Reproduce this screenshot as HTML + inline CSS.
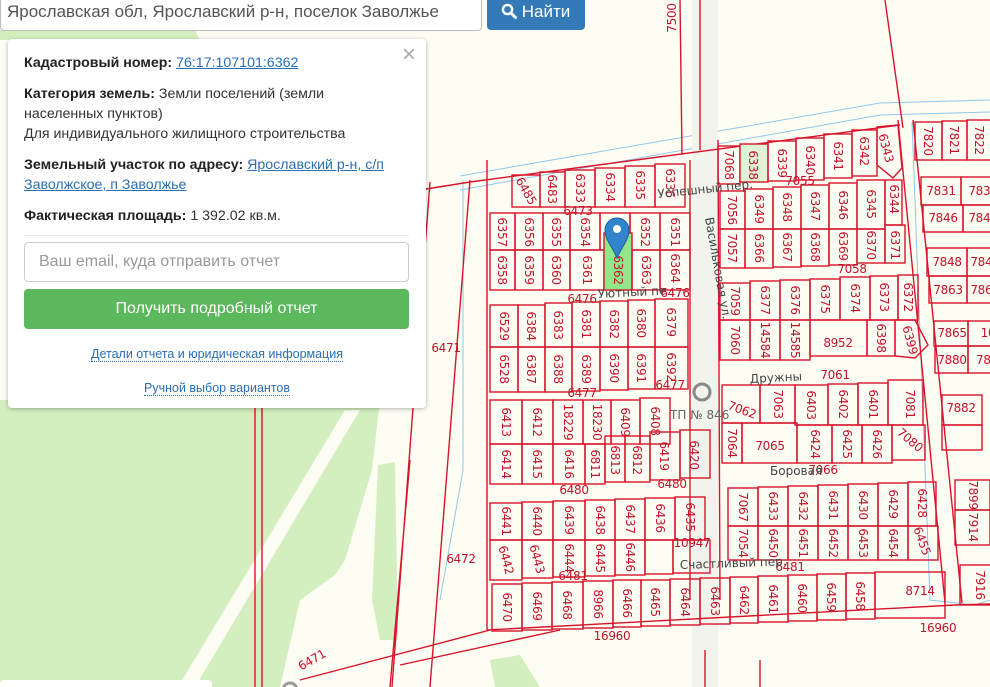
<!DOCTYPE html>
<html><head><meta charset="utf-8">
<style>
html,body{margin:0;padding:0;width:990px;height:687px;overflow:hidden;background:#fdfdf4;font-family:"Liberation Sans",Arial,sans-serif}
#map{position:absolute;left:0;top:0}
.p rect,.p polygon{fill:none;stroke:#d8142b;stroke-width:1.4}
.p text{fill:#c3132b;font-size:12px;text-anchor:middle;dominant-baseline:central;font-family:"DejaVu Sans","Liberation Sans",sans-serif;letter-spacing:-0.3px}
.st{fill:#444;font-size:12px;font-family:"DejaVu Sans","Liberation Sans",sans-serif}
.ln{stroke:#d8142b;stroke-width:1.4;fill:none}
.srch{position:absolute;left:0;top:-3px;width:482px;height:34px;border:1px solid #bbb;border-radius:0 0 4px 4px;background:#fff;box-sizing:border-box;font-size:17px;color:#555;padding:4px 0 0 6px}
.btn{position:absolute;left:487px;top:-3px;width:98px;height:33px;background:#337ab7;border-radius:0 0 4px 4px;color:#fff;font-size:17px;box-sizing:border-box;padding:5px 0 0 14px}
.panel{position:absolute;left:8px;top:39px;width:418px;height:369px;background:#fff;border-radius:4px;box-shadow:0 1px 4px rgba(0,0,0,.3);font-size:14.2px;color:#333;line-height:20px}
.panel b{color:#222}
.panel a{color:#2a6fb5;text-decoration:underline}
.panel .d{color:#2a6fb5;text-decoration:none;border-bottom:1px dotted #2a6fb5;font-size:12.5px}
</style></head><body>
<svg id="map" width="990" height="687" viewBox="0 0 990 687">
<polygon points="0,30 195,30 200,40 0,40" fill="#d4efbf"/>
<polygon points="0,400 380,400 372,470 345,560 335,575 300,600 280,687 0,687" fill="#d4efbf"/>
<polygon points="345,410 360,410 195,687 178,687" fill="#fdfdf4"/>
<polygon points="378,465 395,462 398,640 380,640 372,600" fill="#d4efbf"/>
<polygon points="490,660 520,655 540,687 495,687" fill="#d4efbf"/>
<path d="M460,176 L880,103 L990,100" stroke="#8fc7ea" fill="none"/>
<path d="M460,190 L880,115 L990,112" stroke="#8fc7ea" fill="none"/>
<path d="M463,180 L463,470 L440,600" stroke="#8fc7ea" fill="none"/>
<path d="M912,122 L930,600 L975,605 L990,600" stroke="#8fc7ea" fill="none"/>
<rect x="692" y="0" width="26" height="687" fill="#f3f3ee"/>
<path class="ln" d="M680,0 L682,155 M700,0 L700,150 M690,160 L690,600 M718,140 L720,600 M885,0 L903,128 M898,120 L945,603 M913,120 L962,603"/>
<path class="ln" d="M430,182 L392,687 M470,180 L430,687 M487,160 L487,630 L955,605 L990,604 M400,665 L560,630 M300,680 L490,630 M255,400 L255,687 M262,400 L262,687 M420,190 L470,182 L900,125 M410,460 L390,687"/>
<path class="ln" d="M705,650 L705,687 M760,660 L760,687" stroke-width="1"/>
<g class="p">
<rect x="512" y="175" width="28" height="32"/><text x="526" y="191" transform="rotate(60 526 191)">6485</text>
<rect x="540" y="172" width="25" height="35"/><text x="552" y="189" transform="rotate(90 552 189)">6483</text>
<rect x="565" y="170" width="30" height="37"/><text x="580" y="188" transform="rotate(90 580 188)">6333</text>
<rect x="595" y="168" width="30" height="39"/><text x="610" y="187" transform="rotate(90 610 187)">6334</text>
<rect x="625" y="166" width="30" height="41"/><text x="640" y="185" transform="rotate(90 640 185)">6335</text>
<rect x="655" y="164" width="30" height="43"/><text x="670" y="183" transform="rotate(90 670 183)">6336</text>
<text x="578" y="211">6473</text>
<rect x="490" y="213" width="25" height="37"/><text x="502" y="232" transform="rotate(90 502 232)">6357</text>
<rect x="515" y="213" width="28" height="37"/><text x="529" y="232" transform="rotate(90 529 232)">6356</text>
<rect x="543" y="213" width="27" height="37"/><text x="556" y="232" transform="rotate(90 556 232)">6355</text>
<rect x="570" y="213" width="30" height="37"/><text x="585" y="232" transform="rotate(90 585 232)">6354</text>
<rect x="600" y="213" width="30" height="37"/>
<rect x="630" y="213" width="30" height="37"/><text x="645" y="232" transform="rotate(90 645 232)">6352</text>
<rect x="660" y="213" width="30" height="37"/><text x="675" y="232" transform="rotate(90 675 232)">6351</text>
<rect x="490" y="250" width="25" height="40"/><text x="502" y="270" transform="rotate(90 502 270)">6358</text>
<rect x="515" y="250" width="28" height="40"/><text x="529" y="270" transform="rotate(90 529 270)">6359</text>
<rect x="543" y="250" width="27" height="40"/><text x="556" y="270" transform="rotate(90 556 270)">6360</text>
<rect x="570" y="250" width="34" height="40"/><text x="587" y="270" transform="rotate(90 587 270)">6361</text>
<rect x="604" y="233" width="28" height="57" style="fill:#8ee88a"/><text x="618" y="270" transform="rotate(90 618 270)">6362</text>
<rect x="632" y="250" width="28" height="40"/><text x="646" y="270" transform="rotate(90 646 270)">6363</text>
<rect x="660" y="250" width="30" height="40"/><text x="675" y="268" transform="rotate(90 675 268)">6364</text>
<text x="582" y="299" text-anchor="middle">6476</text><text x="675" y="293" text-anchor="middle">6476</text>
<rect x="490" y="305" width="28" height="42"/><text x="504" y="326" transform="rotate(90 504 326)">6529</text>
<rect x="518" y="305" width="27" height="42"/><text x="531" y="326" transform="rotate(90 531 326)">6384</text>
<rect x="545" y="303" width="27" height="44"/><text x="558" y="325" transform="rotate(90 558 325)">6383</text>
<rect x="572" y="302" width="28" height="45"/><text x="586" y="324" transform="rotate(90 586 324)">6381</text>
<rect x="600" y="301" width="28" height="46"/><text x="614" y="324" transform="rotate(90 614 324)">6382</text>
<rect x="628" y="300" width="27" height="47"/><text x="641" y="323" transform="rotate(90 641 323)">6380</text>
<rect x="655" y="299" width="33" height="48"/><text x="671" y="322" transform="rotate(90 671 322)">6379</text>
<rect x="490" y="347" width="28" height="45"/><text x="504" y="369" transform="rotate(90 504 369)">6528</text>
<rect x="518" y="347" width="27" height="45"/><text x="531" y="369" transform="rotate(90 531 369)">6387</text>
<rect x="545" y="347" width="27" height="45"/><text x="558" y="369" transform="rotate(90 558 369)">6388</text>
<rect x="572" y="347" width="28" height="44"/><text x="586" y="369" transform="rotate(90 586 369)">6389</text>
<rect x="600" y="347" width="28" height="43"/><text x="614" y="368" transform="rotate(90 614 368)">6390</text>
<rect x="628" y="347" width="27" height="42"/><text x="641" y="368" transform="rotate(90 641 368)">6391</text>
<rect x="655" y="347" width="33" height="42"/><text x="671" y="367" transform="rotate(90 671 367)">6392</text>
<text x="582" y="393" text-anchor="middle">6477</text><text x="670" y="385" text-anchor="middle">6477</text>
<rect x="490" y="400" width="32" height="44"/><text x="506" y="422" transform="rotate(90 506 422)">6413</text>
<rect x="522" y="400" width="31" height="44"/><text x="537" y="422" transform="rotate(90 537 422)">6412</text>
<rect x="553" y="400" width="30" height="44"/><text x="568" y="422" transform="rotate(90 568 422)">18229</text>
<rect x="583" y="400" width="28" height="44"/><text x="597" y="422" transform="rotate(90 597 422)">18230</text>
<rect x="611" y="400" width="29" height="44"/><text x="625" y="422" transform="rotate(90 625 422)">6409</text>
<rect x="640" y="398" width="30" height="46"/><text x="655" y="421" transform="rotate(90 655 421)">6408</text>
<rect x="490" y="444" width="32" height="40"/><text x="506" y="464" transform="rotate(90 506 464)">6414</text>
<rect x="522" y="444" width="31" height="40"/><text x="537" y="464" transform="rotate(90 537 464)">6415</text>
<rect x="553" y="444" width="32" height="40"/><text x="569" y="464" transform="rotate(90 569 464)">6416</text>
<rect x="585" y="444" width="20" height="40"/><text x="595" y="464" transform="rotate(90 595 464)">6811</text>
<rect x="605" y="436" width="20" height="46"/><text x="615" y="460" transform="rotate(90 615 460)">6813</text>
<rect x="625" y="436" width="25" height="46"/><text x="637" y="460" transform="rotate(90 637 460)">6812</text>
<rect x="650" y="432" width="30" height="48"/><text x="664" y="456" transform="rotate(90 664 456)">6419</text>
<rect x="680" y="430" width="30" height="48"/><text x="694" y="455" transform="rotate(90 694 455)">6420</text>
<text x="574" y="490" text-anchor="middle">6480</text><text x="672" y="484" text-anchor="middle">6480</text>
<rect x="490" y="503" width="32" height="37"/><text x="506" y="521" transform="rotate(90 506 521)">6441</text>
<rect x="522" y="502" width="31" height="38"/><text x="537" y="521" transform="rotate(90 537 521)">6440</text>
<rect x="553" y="501" width="32" height="39"/><text x="569" y="520" transform="rotate(90 569 520)">6439</text>
<rect x="585" y="500" width="30" height="40"/><text x="600" y="520" transform="rotate(90 600 520)">6438</text>
<rect x="615" y="499" width="30" height="41"/><text x="630" y="519" transform="rotate(90 630 519)">6437</text>
<rect x="645" y="498" width="30" height="42"/><text x="660" y="518" transform="rotate(90 660 518)">6436</text>
<rect x="675" y="497" width="30" height="43"/><text x="690" y="517" transform="rotate(90 690 517)">6435</text>
<rect x="490" y="540" width="32" height="40"/><text x="506" y="560" transform="rotate(75 506 560)">6442</text>
<rect x="522" y="540" width="31" height="38"/><text x="537" y="559" transform="rotate(75 537 559)">6443</text>
<rect x="553" y="540" width="32" height="37"/><text x="569" y="558" transform="rotate(90 569 558)">6444</text>
<rect x="585" y="540" width="30" height="36"/><text x="600" y="558" transform="rotate(90 600 558)">6445</text>
<rect x="615" y="540" width="30" height="35"/><text x="630" y="557" transform="rotate(90 630 557)">6446</text>
<rect x="645" y="540" width="28" height="34"/>
<rect x="673" y="540" width="37" height="33"/><text x="692" y="543">10947</text>
<text x="573" y="576" text-anchor="middle">6481</text>
<rect x="492" y="584" width="30" height="47"/><text x="507" y="607" transform="rotate(90 507 607)">6470</text>
<rect x="522" y="583" width="30" height="47"/><text x="537" y="606" transform="rotate(90 537 606)">6469</text>
<rect x="552" y="582" width="31" height="47"/><text x="567" y="605" transform="rotate(90 567 605)">6468</text>
<rect x="583" y="581" width="30" height="47"/><text x="598" y="604" transform="rotate(90 598 604)">8966</text>
<rect x="613" y="580" width="28" height="47"/><text x="627" y="603" transform="rotate(90 627 603)">6466</text>
<rect x="641" y="580" width="29" height="46"/><text x="655" y="602" transform="rotate(90 655 602)">6465</text>
<rect x="670" y="579" width="30" height="46"/><text x="685" y="602" transform="rotate(90 685 602)">6464</text>
<rect x="700" y="578" width="30" height="46"/><text x="715" y="601" transform="rotate(90 715 601)">6463</text>
<rect x="730" y="577" width="28" height="46"/><text x="744" y="600" transform="rotate(90 744 600)">6462</text>
<rect x="758" y="576" width="30" height="46"/><text x="773" y="599" transform="rotate(90 773 599)">6461</text>
<rect x="788" y="575" width="29" height="46"/><text x="802" y="598" transform="rotate(90 802 598)">6460</text>
<rect x="817" y="574" width="29" height="46"/><text x="831" y="597" transform="rotate(90 831 597)">6459</text>
<rect x="846" y="573" width="29" height="46"/><text x="860" y="596" transform="rotate(90 860 596)">6458</text>
<rect x="875" y="572" width="70" height="46"/><text x="920" y="591">8714</text>
<text x="612" y="636">16960</text><text x="938" y="628">16960</text>
<rect x="718" y="146" width="22" height="38"/><text x="729" y="165" transform="rotate(90 729 165)">7068</text>
<rect x="740" y="144" width="28" height="38" style="fill:#dff3d6"/><text x="753" y="165" transform="rotate(90 753 165)">6338</text>
<rect x="768" y="141" width="28" height="40"/><text x="782" y="163" transform="rotate(90 782 163)">6339</text>
<rect x="796" y="138" width="28" height="42"/><text x="810" y="160" transform="rotate(90 810 160)">6340</text>
<rect x="824" y="134" width="28" height="44"/><text x="838" y="156" transform="rotate(90 838 156)">6341</text>
<rect x="852" y="130" width="25" height="46"/><text x="864" y="151" transform="rotate(90 864 151)">6342</text>
<polygon points="877,127 898,125 902,168 893,178 877,165"/><text x="886" y="148" transform="rotate(75 886 148)">6343</text>
<text x="800" y="181">7055</text>
<rect x="720" y="191" width="25" height="38"/><text x="732" y="210" transform="rotate(90 732 210)">7056</text>
<rect x="745" y="189" width="28" height="40"/><text x="759" y="209" transform="rotate(90 759 209)">6349</text>
<rect x="773" y="187" width="28" height="42"/><text x="787" y="207" transform="rotate(90 787 207)">6348</text>
<rect x="801" y="185" width="28" height="44"/><text x="815" y="206" transform="rotate(90 815 206)">6347</text>
<rect x="829" y="183" width="28" height="46"/><text x="843" y="205" transform="rotate(90 843 205)">6346</text>
<rect x="857" y="180" width="28" height="49"/><text x="871" y="204" transform="rotate(90 871 204)">6345</text>
<rect x="885" y="180" width="17" height="45"/><text x="894" y="199" transform="rotate(90 894 199)">6344</text>
<rect x="720" y="229" width="25" height="39"/><text x="732" y="248" transform="rotate(90 732 248)">7057</text>
<rect x="745" y="229" width="28" height="39"/><text x="759" y="248" transform="rotate(90 759 248)">6366</text>
<rect x="773" y="229" width="28" height="38"/><text x="787" y="247" transform="rotate(90 787 247)">6367</text>
<rect x="801" y="229" width="28" height="37"/><text x="815" y="247" transform="rotate(90 815 247)">6368</text>
<rect x="829" y="229" width="28" height="36"/><text x="843" y="246" transform="rotate(90 843 246)">6369</text>
<rect x="857" y="229" width="28" height="34"/><text x="871" y="245" transform="rotate(90 871 245)">6370</text>
<rect x="885" y="225" width="20" height="38"/><text x="895" y="245" transform="rotate(90 895 245)">6371</text>
<text x="852" y="269" text-anchor="middle">7058</text>
<rect x="720" y="283" width="30" height="37"/><text x="735" y="301" transform="rotate(90 735 301)">7059</text>
<rect x="750" y="281" width="30" height="39"/><text x="765" y="300" transform="rotate(90 765 300)">6377</text>
<rect x="780" y="280" width="30" height="40"/><text x="795" y="300" transform="rotate(90 795 300)">6376</text>
<rect x="810" y="279" width="30" height="41"/><text x="825" y="299" transform="rotate(90 825 299)">6375</text>
<rect x="840" y="277" width="30" height="43"/><text x="855" y="298" transform="rotate(90 855 298)">6374</text>
<rect x="870" y="276" width="28" height="44"/><text x="884" y="297" transform="rotate(90 884 297)">6373</text>
<rect x="898" y="275" width="20" height="45"/><text x="908" y="297" transform="rotate(90 908 297)">6372</text>
<rect x="720" y="320" width="30" height="40"/><text x="735" y="340" transform="rotate(90 735 340)">7060</text>
<rect x="750" y="320" width="30" height="40"/><text x="765" y="340" transform="rotate(90 765 340)">14584</text>
<rect x="780" y="320" width="30" height="40"/><text x="795" y="340" transform="rotate(90 795 340)">14585</text>
<rect x="810" y="320" width="57" height="36"/><text x="838" y="343">8952</text>
<rect x="867" y="320" width="28" height="36"/><text x="881" y="338" transform="rotate(90 881 338)">6398</text>
<polygon points="895,320 915,320 928,345 915,358 895,356"/><text x="910" y="340" transform="rotate(75 910 340)">6399</text>
<text x="835" y="375" text-anchor="middle">7061</text>
<rect x="722" y="385" width="38" height="38"/><text x="742" y="410" transform="rotate(20 742 410)">7062</text>
<rect x="760" y="385" width="35" height="38"/><text x="778" y="404" transform="rotate(90 778 404)">7063</text>
<rect x="795" y="385" width="33" height="40"/><text x="811" y="405" transform="rotate(90 811 405)">6403</text>
<rect x="828" y="384" width="30" height="41"/><text x="843" y="404" transform="rotate(90 843 404)">6402</text>
<rect x="858" y="383" width="30" height="42"/><text x="873" y="404" transform="rotate(90 873 404)">6401</text>
<rect x="888" y="380" width="35" height="45"/><text x="910" y="404" transform="rotate(90 910 404)">7081</text>
<rect x="722" y="423" width="20" height="40"/><text x="732" y="443" transform="rotate(90 732 443)">7064</text>
<rect x="742" y="423" width="55" height="40"/><text x="770" y="446">7065</text>
<rect x="797" y="425" width="35" height="38"/><text x="815" y="444" transform="rotate(90 815 444)">6424</text>
<rect x="832" y="425" width="30" height="38"/><text x="847" y="444" transform="rotate(90 847 444)">6425</text>
<rect x="862" y="425" width="30" height="38"/><text x="877" y="444" transform="rotate(90 877 444)">6426</text>
<rect x="892" y="425" width="33" height="35"/><text x="910" y="440" transform="rotate(40 910 440)">7080</text>
<text x="823" y="470">7066</text>
<rect x="728" y="488" width="30" height="38"/><text x="743" y="507" transform="rotate(90 743 507)">7067</text>
<rect x="758" y="487" width="30" height="39"/><text x="773" y="506" transform="rotate(90 773 506)">6433</text>
<rect x="788" y="486" width="30" height="40"/><text x="803" y="506" transform="rotate(90 803 506)">6432</text>
<rect x="818" y="485" width="30" height="41"/><text x="833" y="505" transform="rotate(90 833 505)">6431</text>
<rect x="848" y="484" width="30" height="42"/><text x="863" y="505" transform="rotate(90 863 505)">6430</text>
<rect x="878" y="483" width="30" height="43"/><text x="893" y="504" transform="rotate(90 893 504)">6429</text>
<rect x="908" y="482" width="28" height="44"/><text x="922" y="503" transform="rotate(90 922 503)">6428</text>
<rect x="728" y="526" width="30" height="34"/><text x="743" y="543" transform="rotate(90 743 543)">7054</text>
<rect x="758" y="526" width="30" height="34"/><text x="773" y="543" transform="rotate(90 773 543)">6450</text>
<rect x="788" y="526" width="30" height="34"/><text x="803" y="543" transform="rotate(90 803 543)">6451</text>
<rect x="818" y="526" width="30" height="34"/><text x="833" y="543" transform="rotate(90 833 543)">6452</text>
<rect x="848" y="526" width="30" height="34"/><text x="863" y="543" transform="rotate(90 863 543)">6453</text>
<rect x="878" y="526" width="30" height="34"/><text x="893" y="543" transform="rotate(90 893 543)">6454</text>
<rect x="908" y="526" width="30" height="34"/><text x="922" y="541" transform="rotate(70 922 541)">6455</text>
<text x="790" y="567">6481</text>
<rect x="915" y="122" width="27" height="38"/><text x="928" y="141" transform="rotate(90 928 141)">7820</text>
<rect x="942" y="121" width="25" height="39"/><text x="954" y="140" transform="rotate(90 954 140)">7821</text>
<rect x="967" y="120" width="26" height="40"/><text x="979" y="140" transform="rotate(90 979 140)">7822</text>
<rect x="921" y="177" width="40" height="28"/><text x="941" y="191">7831</text>
<rect x="961" y="177" width="32" height="28"/><text x="983" y="191">7832</text>
<rect x="923" y="205" width="40" height="27"/><text x="943" y="218">7846</text>
<rect x="963" y="205" width="30" height="27"/><text x="983" y="218">7845</text>
<rect x="927" y="248" width="40" height="28"/><text x="947" y="262">7848</text>
<rect x="967" y="248" width="26" height="28"/><text x="985" y="262">7849</text>
<rect x="929" y="276" width="38" height="27"/><text x="948" y="290">7863</text>
<rect x="967" y="276" width="26" height="27"/><text x="985" y="290">7864</text>
<rect x="934" y="321" width="34" height="25"/><text x="952" y="333">7865</text>
<rect x="968" y="321" width="25" height="25"/><text x="988" y="333">10</text>
<rect x="935" y="346" width="33" height="27"/><text x="952" y="360">7880</text>
<rect x="968" y="346" width="25" height="27"/><text x="987" y="360">787</text>
<rect x="942" y="395" width="40" height="30"/><text x="961" y="408">7882</text>
<rect x="942" y="425" width="40" height="25"/>
<rect x="955" y="480" width="35" height="30"/><text x="973" y="495" transform="rotate(90 973 495)">7899</text>
<rect x="955" y="510" width="35" height="35"/><text x="973" y="527" transform="rotate(90 973 527)">7914</text>
<rect x="960" y="565" width="35" height="40"/><text x="980" y="585" transform="rotate(90 980 585)">7916</text>
<text x="446" y="348">6471</text><text x="461" y="559">6472</text>
<text x="312" y="660" transform="rotate(-30 312 660)">6471</text>
<text x="672" y="18" transform="rotate(-90 672 18)">7500</text>
</g>
<text class="st" x="658" y="198" transform="rotate(-6 658 198)">Успешный пер.</text>
<text class="st" x="598" y="298" transform="rotate(-3 598 298)">Уютный пе</text>
<text class="st" x="705" y="218" transform="rotate(80 705 218)">Васильковая ул.</text>
<text class="st" x="750" y="383" transform="rotate(-3 750 383)">Дружны</text>
<text class="st" x="770" y="475">Боровая</text>
<text class="st" x="680" y="569" transform="rotate(-2 680 569)">Счастливый пер.</text>
<text class="st" x="670" y="419" style="fill:#666">ТП № 846</text>
<circle cx="702" cy="392" r="8" fill="none" stroke="#888" stroke-width="3"/>
<circle cx="290" cy="690" r="7" fill="none" stroke="#999" stroke-width="3"/>
<path d="M617,258 C612,246 605,240 605,230 A12,12 0 0 1 629,230 C629,240 622,246 617,258 Z" fill="#2f84cc" stroke="#1f5f96" stroke-width="1"/>
<circle cx="617" cy="229" r="4" fill="#fff"/>
<rect x="0" y="680" width="212" height="10" rx="4" fill="#fff"/>
</svg>

<div class="srch">Ярославская обл, Ярославский р-н, поселок Заволжье</div>
<div class="btn"><svg width="16" height="16" viewBox="0 0 16 16" style="vertical-align:-2px"><circle cx="6.5" cy="6.5" r="4.6" fill="none" stroke="#fff" stroke-width="2.4"/><path d="M10 10 L14.5 14.5" stroke="#fff" stroke-width="3" stroke-linecap="round"/></svg> Найти</div>

<div class="panel">
  <div style="position:absolute;right:10px;top:4px;font-size:24px;color:#aaa;line-height:24px">×</div>
  <div style="position:absolute;left:16px;top:14px;width:366px">
    <div><b>Кадастровый номер:</b> <a>76:17:107101:6362</a></div>
    <div style="margin-top:11px"><b>Категория земель:</b> Земли поселений (земли населенных пунктов)<br>Для индивидуального жилищного строительства</div>
    <div style="margin-top:11px"><b>Земельный участок по адресу:</b> <a>Ярославский р-н, с/п Заволжское, п Заволжье</a></div>
    <div style="margin-top:11px"><b>Фактическая площадь:</b> 1 392.02 кв.м.</div>
  </div>
  <div style="position:absolute;left:16px;top:196px;width:385px;border-top:1px solid #e6e6e6"></div>
  <div style="position:absolute;left:16px;top:203px;width:385px;height:40px;border:1px solid #ccc;border-radius:4px;box-sizing:border-box;font-size:16px;color:#999;padding:10px 0 0 14px;line-height:18px">Ваш email, куда отправить отчет</div>
  <div style="position:absolute;left:16px;top:250px;width:385px;height:40px;background:#5cb85c;border-radius:4px;color:#fff;font-size:16px;text-align:center;line-height:40px">Получить подробный отчет</div>
  <div style="position:absolute;left:0;top:305px;width:418px;text-align:center"><span class="d">Детали отчета и юридическая информация</span></div>
  <div style="position:absolute;left:0;top:339px;width:418px;text-align:center"><span class="d">Ручной выбор вариантов</span></div>
</div>
</body></html>
